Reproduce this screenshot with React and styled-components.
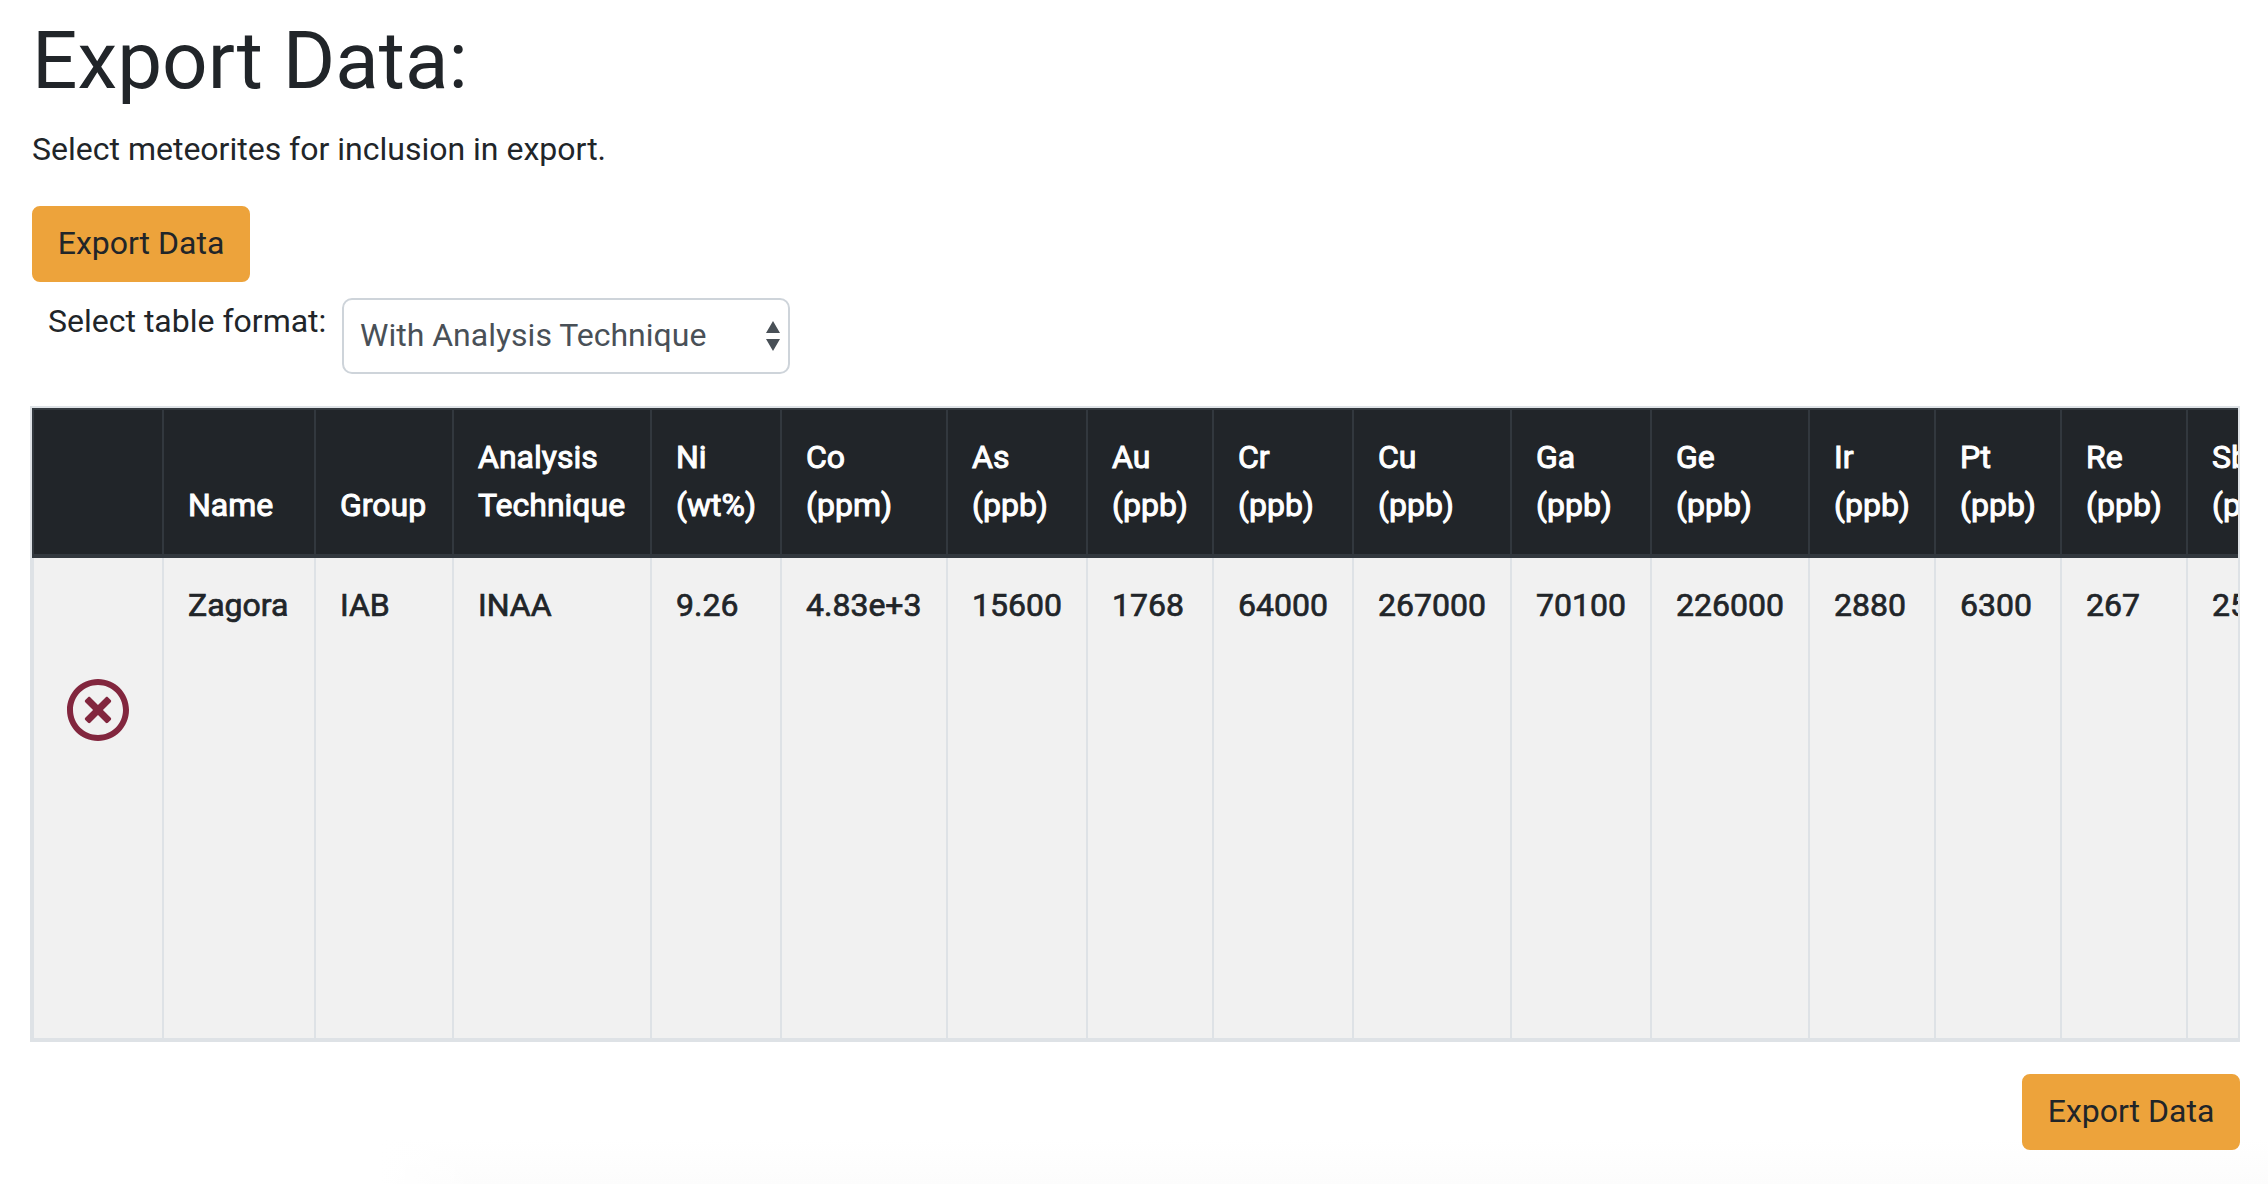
import React from "react";
import styled, { createGlobalStyle } from "styled-components";
import { FaRegTimesCircle } from "react-icons/fa";

const GlobalStyle = createGlobalStyle`
  *, *::before, *::after { box-sizing: border-box; }
  body {
    margin: 0;
    overflow: hidden;
    background: #fff;
    color: #212529;
    font: 400 32px/48px Roboto, "Liberation Sans", sans-serif;
  }
`;

const Page = styled.main`
  height: 1184px;
  padding: 13px 28px 0 32px;
  background:
    linear-gradient(90deg, #fff 380px, transparent 480px),
    linear-gradient(#fff 1140px, #fcfcfc 1184px);
`;

const Title = styled.h1`
  margin: 0 0 16px;
  font-size: 80px;
  font-weight: 400;
  line-height: 96px;
`;

const Intro = styled.p`
  margin: 0 0 33px;
`;

const Button = styled.button`
  display: block;
  width: 218px;
  height: 76px;
  padding: 11px 0 13px;
  border: 2px solid #eda33b;
  border-radius: 8px;
  background: #eda33b;
  color: #212529;
  font: inherit;
  white-space: nowrap;
`;

const FormatRow = styled.div`
  display: flex;
  align-items: flex-start;
  gap: 16px;
  margin: 16px 0 32px;
  padding-left: 16px;
`;

const FormatLabel = styled.label`
  width: 278px;
  margin-top: -1px;
  white-space: nowrap;
`;

const FormatSelect = styled.div`
  display: flex;
  align-items: center;
  justify-content: space-between;
  width: 448px;
  height: 76px;
  padding: 0 8px 2px 16px;
  border: 2px solid #ced4da;
  border-radius: 10px;
  background: #fff;
  color: #495057;
  white-space: nowrap;

  svg { margin-top: 2px; }
`;

const TableFrame = styled.div`
  width: 2210px;
  height: 636px;
  margin: 0 0 32px -2px;
  overflow: hidden;
  border: 2px solid #dee2e6;
`;

const Table = styled.table`
  width: 2332px;
  table-layout: fixed;
  border-collapse: separate;
  border-spacing: 0;
`;

const HeadCell = styled.th`
  height: 150px;
  padding: 23px 0 25px 24px;
  border: solid #32383e;
  border-width: 2px 0 4px 2px;
  background: #212529;
  color: #fff;
  font-weight: 400;
  text-align: left;
  vertical-align: bottom;
  white-space: pre-line;
  -webkit-text-stroke: 1px currentColor;
`;

const Cell = styled.td`
  height: 482px;
  padding: 23px 0 24px 24px;
  border: solid #dee2e6;
  border-width: 0 0 2px 2px;
  background: #f1f1f1;
  vertical-align: top;
  white-space: nowrap;
  -webkit-text-stroke: 0.7px currentColor;
`;

const RemoveCell = styled(Cell)`
  padding: 120px 0 0;
  text-align: center;
  color: #82263e;
  -webkit-text-stroke: 0;

  svg { display: block; margin: 0 auto; }
`;

const Footer = styled.footer`
  display: flex;
  justify-content: flex-end;
`;

const columns = [
  { head: "Name", value: "Zagora", width: 152 },
  { head: "Group", value: "IAB", width: 138 },
  { head: "Analysis\nTechnique", value: "INAA", width: 198 },
  { head: "Ni\n(wt%)", value: "9.26", width: 130 },
  { head: "Co\n(ppm)", value: "4.83e+3", width: 166 },
  { head: "As\n(ppb)", value: "15600", width: 140 },
  { head: "Au\n(ppb)", value: "1768", width: 126 },
  { head: "Cr\n(ppb)", value: "64000", width: 140 },
  { head: "Cu\n(ppb)", value: "267000", width: 158 },
  { head: "Ga\n(ppb)", value: "70100", width: 140 },
  { head: "Ge\n(ppb)", value: "226000", width: 158 },
  { head: "Ir\n(ppb)", value: "2880", width: 126 },
  { head: "Pt\n(ppb)", value: "6300", width: 126 },
  { head: "Re\n(ppb)", value: "267", width: 126 },
  { head: "Sb\n(ppb)", value: "250", width: 178 },
];

export default function App() {
  return (
    <>
      <GlobalStyle />
      <Page>
        <Title>Export Data:</Title>
        <Intro>Select meteorites for inclusion in export.</Intro>
        <Button>Export Data</Button>
        <FormatRow>
          <FormatLabel>Select table format:</FormatLabel>
          <FormatSelect role="combobox">
            With Analysis Technique
            <svg width="14" height="30" viewBox="0 0 14 30" fill="#495057">
              <path d="M7 0L0 12h14zM7 30L0 18h14z" />
            </svg>
          </FormatSelect>
        </FormatRow>
        <TableFrame>
          <Table>
            <colgroup>
              <col width="130" />
              {columns.map((c) => <col key={c.head} width={c.width} />)}
            </colgroup>
            <thead>
              <tr>
                <HeadCell />
                {columns.map((c) => <HeadCell key={c.head}>{c.head}</HeadCell>)}
              </tr>
            </thead>
            <tbody>
              <tr>
                <RemoveCell><FaRegTimesCircle size={64} /></RemoveCell>
                {columns.map((c) => <Cell key={c.head}>{c.value}</Cell>)}
              </tr>
            </tbody>
          </Table>
        </TableFrame>
        <Footer>
          <Button>Export Data</Button>
        </Footer>
      </Page>
    </>
  );
}
